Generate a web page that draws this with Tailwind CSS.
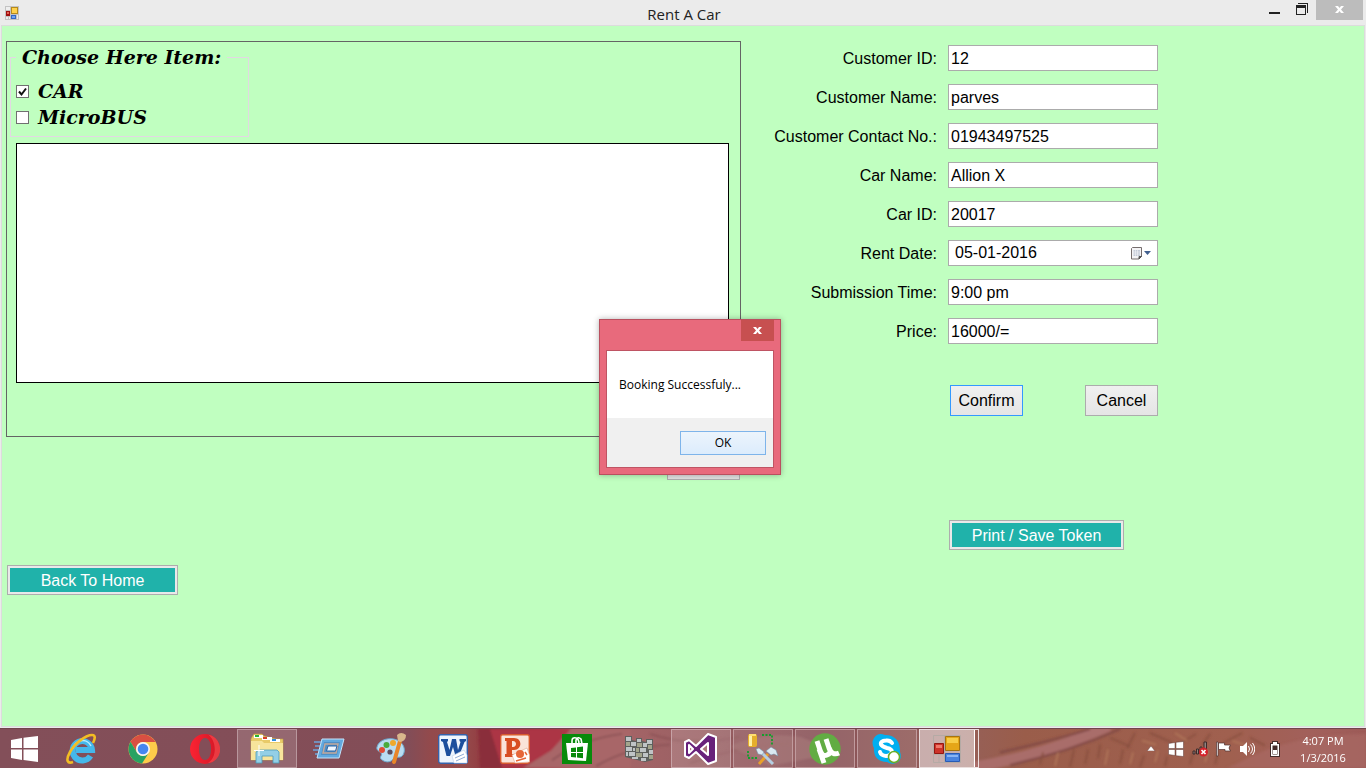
<!DOCTYPE html>
<html lang="en">
<head>
<meta charset="utf-8">
<title>Rent A Car</title>
<script src="https://cdn.jsdelivr.net/npm/@tailwindcss/browser@4"></script>
</head>
<body class="relative flex h-screen flex-col overflow-hidden bg-[#ebebeb] font-['Liberation_Sans',Arial,sans-serif] text-base leading-5 text-black">

<!-- Title bar -->
<header class="flex h-[25px] shrink-0 items-start">
  <div class="flex flex-1 pl-[5px] pt-[6px]">
    <svg width="14" height="14" viewBox="0 0 14 14"><path fill="#c3c3c3" d="M0 0h14v14H0z"/><path fill="#eee" d="M1 1h4v3H1zM1 11h2v2H1zM4 11h1v2H4zM12 9h1v4h-1z"/><path fill="#b58a1d" d="M6 1h7v7H6z"/><path fill="#ffd24c" d="M7 2h5v5H7z"/><path fill="#a01010" d="M1 5h4v5H1z"/><path fill="#e36452" d="M2 6h2v2H2z"/><path fill="#3567c4" d="M6 9h5v4H6z"/><path fill="#6ea4f2" d="M7 10h3v2H7z"/></svg>
  </div>
  <h1 class="pt-1 font-['Open_Sans',sans-serif] text-[15px] leading-5 text-[#222]">Rent A Car</h1>
  <div class="flex flex-1 justify-end pr-[3px]">
    <button aria-label="Minimize" class="flex h-5 w-[28px] justify-center pt-3"><svg width="11" height="2"><path fill="#222" d="M0 0h11v2H0z"/></svg></button>
    <button aria-label="Restore" class="flex h-5 w-[28px] justify-center pt-[3px]"><svg width="12" height="12"><path fill="#222" d="M2 0h10v10h-1V1H2zM0 2h10v10H0zM1 5v6h8V5z" fill-rule="evenodd"/></svg></button>
    <button aria-label="Close" class="flex h-5 w-[47px] justify-center bg-[#bcbcbc] pt-[6px]"><svg width="9" height="7"><path fill="#fff" d="M0 0h3l1.500 2L6 0h3L6 3.500 9 7H6L4.500 5 3 7H0l3-3.500z"/></svg></button>
  </div>
</header>

<!-- Client area -->
<main class="mx-px mb-px grid flex-1 grid-cols-[735fr_618fr] border border-[#dcdcdc] bg-[#c0ffc0] pl-[4px] pr-[5px] pt-[15px]">
  <div class="flex flex-col">
    <section class="flex h-[396px] flex-col border border-[#646464] pl-[3px] pr-[11px]">
      <fieldset class="h-[95px] w-[239px] border border-[#e2d8e2] px-[5px] font-['Lucida_Handwriting','DejaVu_Serif',serif] text-[19px] font-bold italic">
        <legend class="px-[6px] leading-[30px]">Choose Here Item:</legend>
        <label class="flex h-[30px] items-center gap-[9px] pt-2"><input type="checkbox" checked class="size-[13px] appearance-none border border-[#707070] bg-white"><svg class="-ml-[22px] size-[13px]" viewBox="0 0 13 13"><path d="M3 6.500 5.500 9.500 10 3.500" fill="none" stroke="#111" stroke-width="2"/></svg>CAR</label>
        <label class="flex h-[26px] items-center gap-[9px] pt-1"><input type="checkbox" class="size-[13px] appearance-none border border-[#707070] bg-white">MicroBUS</label>
      </fieldset>
      <div class="ml-[6px] mt-[6px] h-[240px] border border-black bg-white"></div>
    </section>
    <button aria-label="Show" class="mr-px mt-3 h-[31px] w-[73px] self-end border border-[#adadad] bg-[#e1e1e1]"></button>
    <button class="ml-px mt-[85px] h-[30px] w-[171px] border border-[#adadad] bg-[#e9e9e9] p-[2px] text-white"><span class="block h-6 bg-[#20b2aa] leading-[26px]">Back To Home</span></button>
  </div>

  <form class="pt-[4px]">
    <div class="grid w-[417px] grid-cols-[196px_minmax(0,1fr)] gap-x-[11px] gap-y-[13px]">
      <label for="cid" class="pt-[2px] text-right leading-6">Customer ID:</label><input id="cid" value="12" class="h-[26px] w-full border border-[#ababab] bg-white px-[2px] pt-[2px]">
      <label for="cname" class="pt-[2px] text-right leading-6">Customer Name:</label><input id="cname" value="parves" class="h-[26px] w-full border border-[#ababab] bg-white px-[2px] pt-[2px]">
      <label for="contact" class="pt-[2px] text-right leading-6">Customer Contact No.:</label><input id="contact" value="01943497525" class="h-[26px] w-full border border-[#ababab] bg-white px-[2px] pt-[2px]">
      <label for="car" class="pt-[2px] text-right leading-6">Car Name:</label><input id="car" value="Allion X" class="h-[26px] w-full border border-[#ababab] bg-white px-[2px] pt-[2px]">
      <label for="carid" class="pt-[2px] text-right leading-6">Car ID:</label><input id="carid" value="20017" class="h-[26px] w-full border border-[#ababab] bg-white px-[2px] pt-[2px]">
      <label for="date" class="pt-[2px] text-right leading-6">Rent Date:</label>
      <div class="flex h-[26px] items-center border border-[#ababab] bg-white pl-[6px] pr-[5px]">
        <input id="date" value="05-01-2016" class="min-w-0 flex-1">
        <button type="button" aria-label="Pick a date"><svg width="21" height="13" viewBox="0 0 21 13"><path d="M1.500.500h9v9l-2.500 2.500H.500V1.500z" fill="#f4f4f6" stroke="#756d6d"/><path d="M2.500 3h6.500v6H2.500z" fill="#c3cbd8"/><path d="M2 5h7M2 7h7M4.500 3v6M6.500 3v6" stroke="#f4f4f6" stroke-width=".6"/><path d="M10.500 9.500 8 12V9.500z" fill="#555" stroke="#555"/><path fill="#42608f" d="M13 4h7l-3.500 4z"/></svg></button>
      </div>
      <label for="time" class="pt-[2px] text-right leading-6">Submission Time:</label><input id="time" value="9:00 pm" class="h-[26px] w-full border border-[#ababab] bg-white px-[2px] pt-[2px]">
      <label for="price" class="pt-[2px] text-right leading-6">Price:</label><input id="price" value="16000/=" class="h-[26px] w-full border border-[#ababab] bg-white px-[2px] pt-[2px]">
    </div>
    <div class="mt-[41px] flex w-[417px] justify-between pl-[209px]">
      <button type="button" class="h-[31px] w-[73px] border border-[#3399ff] bg-linear-to-b from-[#f0f0f0] to-[#e5e5e5]">Confirm</button>
      <button type="button" class="h-[31px] w-[73px] border border-[#acacac] bg-linear-to-b from-[#f0f0f0] to-[#e5e5e5]">Cancel</button>
    </div>
    <button type="button" class="ml-[208px] mt-[104px] h-[30px] w-[175px] border border-[#adadad] bg-[#e9e9e9] p-[2px] text-white"><span class="block h-6 bg-[#20b2aa] leading-[26px]">Print / Save Token</span></button>
  </form>
</main>

<!-- Message box -->
<div role="dialog" aria-label="Message" class="absolute left-[599px] top-[319px] flex w-[182px] flex-col border border-[#b9505f] bg-[#e86a7c] px-[6px] pb-[6px] font-['Open_Sans',sans-serif] text-xs leading-5 shadow-[0_0_6px_rgba(0,0,0,0.3)]">
  <button aria-label="Close message" class="flex h-[21px] w-[33px] justify-center self-end bg-[#c75050] pt-[7px]"><svg width="9" height="7"><path fill="#fff" d="M0 0h3l1.500 2L6 0h3L6 3.500 9 7H6L4.500 5 3 7H0l3-3.500z"/></svg></button>
  <div class="mt-[9px] border border-[#bf5463]">
    <p class="h-[67px] bg-white pl-3 pt-6">Booking Successfuly...</p>
    <div class="flex h-[49px] justify-end bg-[#f0f0f0] pr-[7px] pt-[13px]">
      <button class="h-6 w-[86px] border border-[#7eb4ea] bg-linear-to-b from-[#ecf4fc] to-[#dcecfc]">OK</button>
    </div>
  </div>
</div>

<!-- Taskbar -->
<footer class="relative flex h-10 shrink-0 items-center overflow-hidden border-t border-[#70454c] bg-[#834f59]">
  <svg class="absolute inset-0 h-full w-full" viewBox="0 0 1366 40" preserveAspectRatio="none">
    <defs>
      <linearGradient id="wall"><stop offset="0" stop-color="#834f59"/><stop offset=".3" stop-color="#834d57"/><stop offset=".315" stop-color="#934a4c"/><stop offset=".34" stop-color="#954b4b"/><stop offset=".36" stop-color="#92343d"/><stop offset=".4" stop-color="#a93a47"/><stop offset=".43" stop-color="#aa6668"/><stop offset=".5" stop-color="#9c6164"/><stop offset=".6" stop-color="#895258"/><stop offset=".7" stop-color="#95605a"/><stop offset=".75" stop-color="#9a5d4a"/><stop offset=".9" stop-color="#a0604f"/><stop offset=".96" stop-color="#a2605b"/><stop offset="1" stop-color="#9d5b58"/></linearGradient>
      <filter id="soft"><feGaussianBlur stdDeviation="1"/></filter>
    </defs>
    <path fill="url(#wall)" d="M0 0h1366v40H0z"/>
    <g filter="url(#soft)">
      <path fill="#ac3545" d="M488 0h83l-20 22-28 18h-25z"/><path fill="#8a2f3a" d="M478 0h12l12 40h-22z"/>
      <path fill="#a86668" d="M571 0h60v40h-108l28-18z"/>
      <path fill="none" stroke="#8e5458" stroke-width="2" d="M552 32q30-22 70-27M596 38q34-20 74-22M650 5q40 14 90 3M690 35q60-20 100-20"/>
      <path fill="#9e6c6d" d="M730 18q30-16 70-10l40 16-70 14z" opacity=".6"/>
      <path fill="none" stroke="#a96d6a" stroke-width="11" d="M974 39q70-12 135-42"/><path fill="none" stroke="#7e4746" stroke-width="2" d="M1000 24q60-14 90-24M1010 37q60-14 110-37"/>
      <path fill="none" stroke="#864e3e" stroke-width="1.500" d="M1040 36l3-12M1070 39l4-18M1085 36l3-15M1098 30l2-14M1110 9l20 9M1135 4l-8 16M1150 4l22 10M1180 15l16-10M1120 36l3-15M1210 5l-8 12M1224 14l18-10M1250 9l15 8M1165 38l2-10M1140 39l4-12M1190 36l3-12M1215 36l3-12"/>
      <path fill="none" stroke="#b47a5c" stroke-width="1.500" d="M1055 38l3-14M1105 37l3-16M1130 36l3-12M1155 34l3-12M1142 12l14 4M1205 34l3-12M1175 4l12 8M1232 12l12 4"/>
      <path fill="#aa6a66" d="M1240 34q50-29 126-29v35h-140z" opacity=".6"/>
    </g>
  </svg>

  <nav class="relative flex h-full flex-1 items-center gap-[2px]">
    <button aria-label="Start" class="flex h-full w-[49px] items-center justify-center"><svg width="27" height="26" viewBox="0 0 27 26"><path fill="#fff" d="M0 4l11-2v10H0zM12.500 1.700 27 0v12H12.500zM0 13.500h11V24L0 22zM12.500 13.500H27V26l-14.500-2z"/></svg></button>

    <button aria-label="Internet Explorer" class="flex h-full w-[60px] items-center justify-center"><svg width="32" height="32" viewBox="0 0 32 32"><path fill="none" stroke="#45b8ea" stroke-width="6" d="M25.500 23A9.700 9.700 0 1 1 27 17H11"/><path fill="none" stroke="#bcecff" stroke-width="1.500" d="M8 16a9.500 9.500 0 0 1 18-3"/><path fill="none" stroke="#f3bd23" stroke-width="2.600" d="M8 29c-5 2-8-1-3-10C10 10 21 2 27 2c4 0 3 4 1 8"/></svg></button>

    <button aria-label="Chrome" class="flex h-full w-[60px] items-center justify-center"><svg width="30" height="30" viewBox="0 0 30 30"><circle cx="15" cy="15" r="14.500" fill="#fdcb4a"/><path fill="#d94f42" d="M2.500 7.700A14.500 14.500 0 0 1 27.600 8H15a7 7 0 0 0-6 10.500z"/><path fill="#28a263" d="M2.500 7.700A14.500 14.500 0 0 0 14 29.500L21 18.500A7 7 0 0 1 9 18.500z"/><circle cx="15" cy="15" r="7" fill="#f5f5f5"/><circle cx="15" cy="15" r="5.300" fill="#4587f0"/></svg></button>

    <button aria-label="Opera" class="flex h-full w-[60px] items-center justify-center"><svg width="30" height="30" viewBox="0 0 30 30"><defs><linearGradient id="op"><stop offset="0" stop-color="#fb2333"/><stop offset="1" stop-color="#d01725"/></linearGradient></defs><path fill="url(#op)" fill-rule="evenodd" d="M15 0a15 15 0 1 0 0 30 15 15 0 0 0 0-30zm0 4c4 0 6 5 6 11s-2 11-6 11-6-5-6-11 2-11 6-11z"/><path fill="#ff5c5c" d="M18 .5a15 15 0 0 1 8 25q-4 4-8 3.500c9-5 9-22 0-28.500z" opacity=".5"/></svg></button>

    <button aria-label="File Explorer" class="flex h-[39px] w-[60px] items-center justify-center border border-[#b9979d] bg-white/15"><svg width="34" height="32" viewBox="0 0 34 32"><path fill="#e8ca68" stroke="#c3a244" stroke-width=".6" d="M2 4l2-3h8l2 2 4 1 8 2h7v21H1V6z"/><path fill="#fff" d="M4 2h9v3H4zM12 4h10v3H12zM20 6h10v3H20z"/><path fill="#26b437" d="M5 2h4v2H5z"/><path fill="#d8412c" d="M13 4h4v2h-4z"/><path fill="#2f8ede" d="M22 6h4v2h-4z"/><path fill="#f7e49b" d="M1 8h11l2 2h19v17H1z"/><path fill="#93cfe6" stroke="#4c9ab8" stroke-width=".8" d="M6 19l3-2h18l2 2v11h-6v-7H12v7H6z"/><path stroke="#fff" d="M9 12v11M4 17.500h10"/></svg></button>

    <button aria-label="Run" class="flex h-full w-[60px] items-center justify-center"><svg width="32" height="22" viewBox="0 0 32 22"><path stroke="#6da4da" stroke-width="1.500" d="M1 4h8M2 8h7M0 12h6M2 16h4"/><path fill="#62a9df" stroke="#c3e5fc" d="M9 1h22l-5 19H4z"/><path fill="#5090c6" d="M11 4h16l-3 13H8z"/><path fill="none" stroke="#c1a89c" stroke-width="1.500" d="M12 6h13l-2 9H10z"/><path fill="#eef6ff" stroke="#2c64a5" d="M15 8h9l-1.500 5h-9z"/></svg></button>

    <button aria-label="Paint" class="flex h-full w-[60px] items-center justify-center"><svg width="32" height="32" viewBox="0 0 32 32"><path fill="#b9dcf1" stroke="#6da8cd" d="M2 14C4 6 15 4 22 7c7 3 9 10 6 15-3 4-7 1-9 3-3 5-9 5-13 1-2-2 2-4 0-6s-5-3-4-6z"/><circle cx="7" cy="17" r="3" fill="#e04b36"/><circle cx="11.500" cy="12" r="3" fill="#4aab3d"/><circle cx="18" cy="10" r="3" fill="#efa92c"/><circle cx="15" cy="19" r="2.600" fill="#5d4c5d"/><path stroke="#e8862a" stroke-width="4" stroke-linecap="round" d="M25 8l-6 21"/><path fill="#d9b78c" d="M22 2q4-4 9 0 0 6-6 7l-2-1z"/></svg></button>

    <button aria-label="Word" class="flex h-full w-[60px] items-center justify-center"><svg width="30" height="30" viewBox="0 0 30 30"><rect x=".7" y=".7" width="28.600" height="28.600" rx="2" fill="#eef5fd" stroke="#3562ab" stroke-width="1.400"/><path fill="#1c4f9d" d="M3 5h7v2L9 8l2.500 8L14 5h4l2 11 2.500-8-1-1V5H28v2l-1.500 1L21 22h-3.500L15 13l-3 9H8.500L5 8 3 7z"/><path fill="#fff" stroke="#bcd0ea" stroke-width=".6" d="M14 22l12-6 3 5v8H16z"/><path stroke="#91add5" d="M17 24l9-4M18 27l9-4"/></svg></button>

    <button aria-label="PowerPoint" class="flex h-full w-[60px] items-center justify-center"><svg width="30" height="30" viewBox="0 0 30 30"><rect x=".7" y=".7" width="28.600" height="28.600" rx="2" fill="#fae4d9" stroke="#d95b2e" stroke-width="1.400"/><path fill="#d84e22" fill-rule="evenodd" d="M5 4h9c9 0 8 12 0 12h-2v4h2v3H5v-3h1.500V7H5zm7 3v6h1c4 0 4-6 0-6z"/><path fill="#fff" stroke="#e3a48a" stroke-width=".6" d="M12 21l15-7 2.500 7v7L15 29z"/><circle cx="20" cy="20" r="4" fill="#e66739"/><path stroke="#e66739" stroke-width="1.500" d="M16 27l10-3M25 18l2 3"/></svg></button>

    <button aria-label="Store" class="flex h-full w-[60px] items-center justify-center"><svg width="30" height="30" viewBox="0 0 30 30"><path fill="#088a0b" d="M0 0h30v30H0z"/><path fill="#fff" d="M4 9h22l-2 18-18-1z"/><path fill="none" stroke="#fff" stroke-width="1.600" d="M10 10V7q0-4 4-3 3 1 3 6M14 9V6q2-4 5-1l1 5"/><path fill="#088a0b" d="M9 14l5-.6V18H9zM15 13.300l6-.8V18h-6zM9 19h5v4.500L9 23zM15 19h6v5.300l-6-.7z"/></svg></button>

    <button aria-label="Firewall" class="flex h-full w-[60px] items-center justify-center"><svg width="30" height="26" viewBox="0 0 30 26"><path fill="#5d605e" d="M1 0h7v4l4 1V2h6v3l4 1V3h7v21l-8 2L1 21z"/><g fill="#bfc4c6"><path d="M2 1h5v4H2zM13 3h4v3h-4zM23 4h5v4h-5z"/><path d="M7 6h5v4H7zM19 7h4v4h-4z"/><path d="M2 11h6v4H2zM16 12h6v4h-6zM9 12h2v3H9z"/><path d="M5 16h6v4H5zM19 17h5v4h-5zM25 14h4v4h-4zM2 16h2v4H2zM8 21h6v2H8zM17 22h5v3h-5z"/></g><path fill="#a3a58c" d="M2 6h4v4H2zM13 7h5v4h-5zM12 12h3v4h-3zM24 9h4v4h-4zM12 17h6v4h-6zM25 19h4v4h-4z"/></svg></button>

    <button aria-label="Visual Studio" class="flex h-[39px] w-[60px] items-center justify-center border border-[#c7a2a6] bg-white/15"><svg width="34" height="32" viewBox="0 0 34 32"><path fill="#68217a" stroke="#fff" stroke-width="2" stroke-linejoin="round" fill-rule="evenodd" d="M1 9l4-2 7 6L24 1l8 3v24l-8 3-12-12-7 6-4-2zM5 12v8l4-4zM24 10l-7 6 7 6z"/></svg></button>

    <button aria-label="SQL Server tools" class="flex h-[39px] w-[60px] items-center justify-center border border-[#c09a9d] bg-white/10"><svg width="32" height="32" viewBox="0 0 32 32"><rect x="1" y="1" width="9" height="13" rx="2" fill="#e5ae2b"/><path fill="#fff0a4" d="M2 3h3v10H2z"/><path fill="#ffdf70" d="M2 1h7v2H2z"/><path fill="none" stroke="#12a02c" stroke-width="1.800" stroke-dasharray="2 1.500" d="M15 2h10v10M1 18v7h10"/><path stroke="#e8a02a" stroke-width="3" d="M12 31l9-10"/><path stroke="#b5cfe2" stroke-width="3" d="M13 18l13 13"/><path fill="#dae8f1" stroke="#6c8ba3" stroke-width=".5" d="M9 16l3-1 5 4-2 3-4-1zM19 18l5-4 5 3 2 6-4-2-3 1z"/></svg></button>

    <button aria-label="uTorrent" class="flex h-[39px] w-[60px] items-center justify-center border border-[#c09a9d] bg-white/10"><svg width="32" height="32" viewBox="0 0 32 32"><circle cx="16" cy="16" r="15.700" fill="#62ac43"/><path fill="none" stroke="#fff" stroke-width="5" d="M8 8l3 9q2 7 7 5t2-7l-3-9M20 15q3 8 10 5M10 16l5 14"/></svg></button>

    <button aria-label="Skype" class="flex h-[39px] w-[60px] items-center justify-center border border-[#c09a9d] bg-white/10"><svg width="30" height="30" viewBox="0 0 30 30"><path fill="#00aff0" d="M2 4q4-6 11-3 15 0 15 17 3 8-4 11-5 2-9-1Q1 27 2 14-1 9 2 4z"/><path fill="none" stroke="#fff" stroke-width="4" stroke-linecap="round" d="M20 9q-2-3-6-2.500-6 .5-5 4 1 2 6 3.500 5 1 5 4-1 4-6 4-5-.5-6-4"/><circle cx="22" cy="23" r="5.500" fill="#fff" stroke="#69ad28" stroke-width="1.500"/></svg></button>

    <button aria-label="Rent A Car" class="flex h-[39px] w-[60px] border border-white/80 pr-[3px]"><span class="flex h-full flex-1 items-center justify-center border-r border-white bg-white/50"><svg width="28" height="28" viewBox="0 0 28 28"><path fill="none" stroke="#b5aaa5" d="M.5.500h27v27H.500zM11.500.500v27M.500 8.500h11M.500 19.500h27M6 19.500v8"/><path fill="#e5a618" stroke="#a77411" d="M12.500 1.500h14v14h-14z"/><path fill="#f8cd48" d="M14 3h11v5H14z"/><path fill="#cd3329" stroke="#941611" d="M1.500 8.500h9v10h-9z"/><path fill="#4a83df" stroke="#285bb5" d="M12.500 18.500h14v8h-14z"/><path fill="#f0786a" d="M3 10h6v3H3z"/><path fill="#8ab5f5" d="M14 20h11v2H14z"/></svg></span></button>
  </nav>

  <div class="relative flex items-center pr-[19px]">
    <button aria-label="Show hidden icons" class="mr-[13px]"><svg width="8" height="5"><path fill="#fff" stroke="#6b4744" stroke-width=".5" d="M0 5l4-5 4 5z"/></svg></button>
    <svg class="mr-2" width="16" height="16" viewBox="0 0 16 16"><path fill="#fff" stroke="#5d3937" stroke-width=".5" d="M.5 2.500 7 1.500v6H.500zM8 1.300 15.500.500v7H8zM.500 8.500H7v6L.500 13.500zM8 8.500h7.500v7L8 14.700z"/></svg>
    <svg class="mr-2" width="16" height="16" viewBox="0 0 16 16"><path fill="#91827f" stroke="#3d2b2a" d="M1 10h2v3H1zM4.500 8h2v5h-2zM8 6h2v7H8zM12 1h2.500v9H12z"/><circle cx="11.500" cy="11" r="4.500" fill="#d5232b"/><path stroke="#fff" stroke-width="1.700" d="M9.500 9l4 4M13.500 9l-4 4"/></svg>
    <svg class="mr-[9px]" width="15" height="16" viewBox="0 0 15 16"><path fill="#fff" stroke="#4e3130" stroke-width=".7" d="M.5 1H2v14H.500zM2.500 2h6v2h6q-3 3 0 6H9V8.500H2.500z"/></svg>
    <svg class="mr-[15px]" width="15" height="16" viewBox="0 0 15 16"><path fill="#fff" d="M0 5h3l4-4v14l-4-4H0z"/><path fill="none" stroke="#fff" d="M8.500 5q2 3 0 6M10.500 3.500q4 4.500 0 9M12.500 2q4.500 6 0 12"/></svg>
    <svg class="mr-[19px]" width="10" height="16" viewBox="0 0 10 16"><path fill="#442c2b" d="M2 0h6v2h2v14H0V2h2z"/><path fill="#fff" fill-rule="evenodd" d="M3 1h4v2h2v12H1V3h2zM2.500 4.500v9h5v-9z"/><path fill="#fff" d="M3 9h4v4H3z"/></svg>
    <div class="w-12 text-center font-['Open_Sans',sans-serif] text-[11px] leading-[17px] text-white"><div>4:07 PM</div><div>1/3/2016</div></div>
  </div>
</footer>
</body>
</html>
